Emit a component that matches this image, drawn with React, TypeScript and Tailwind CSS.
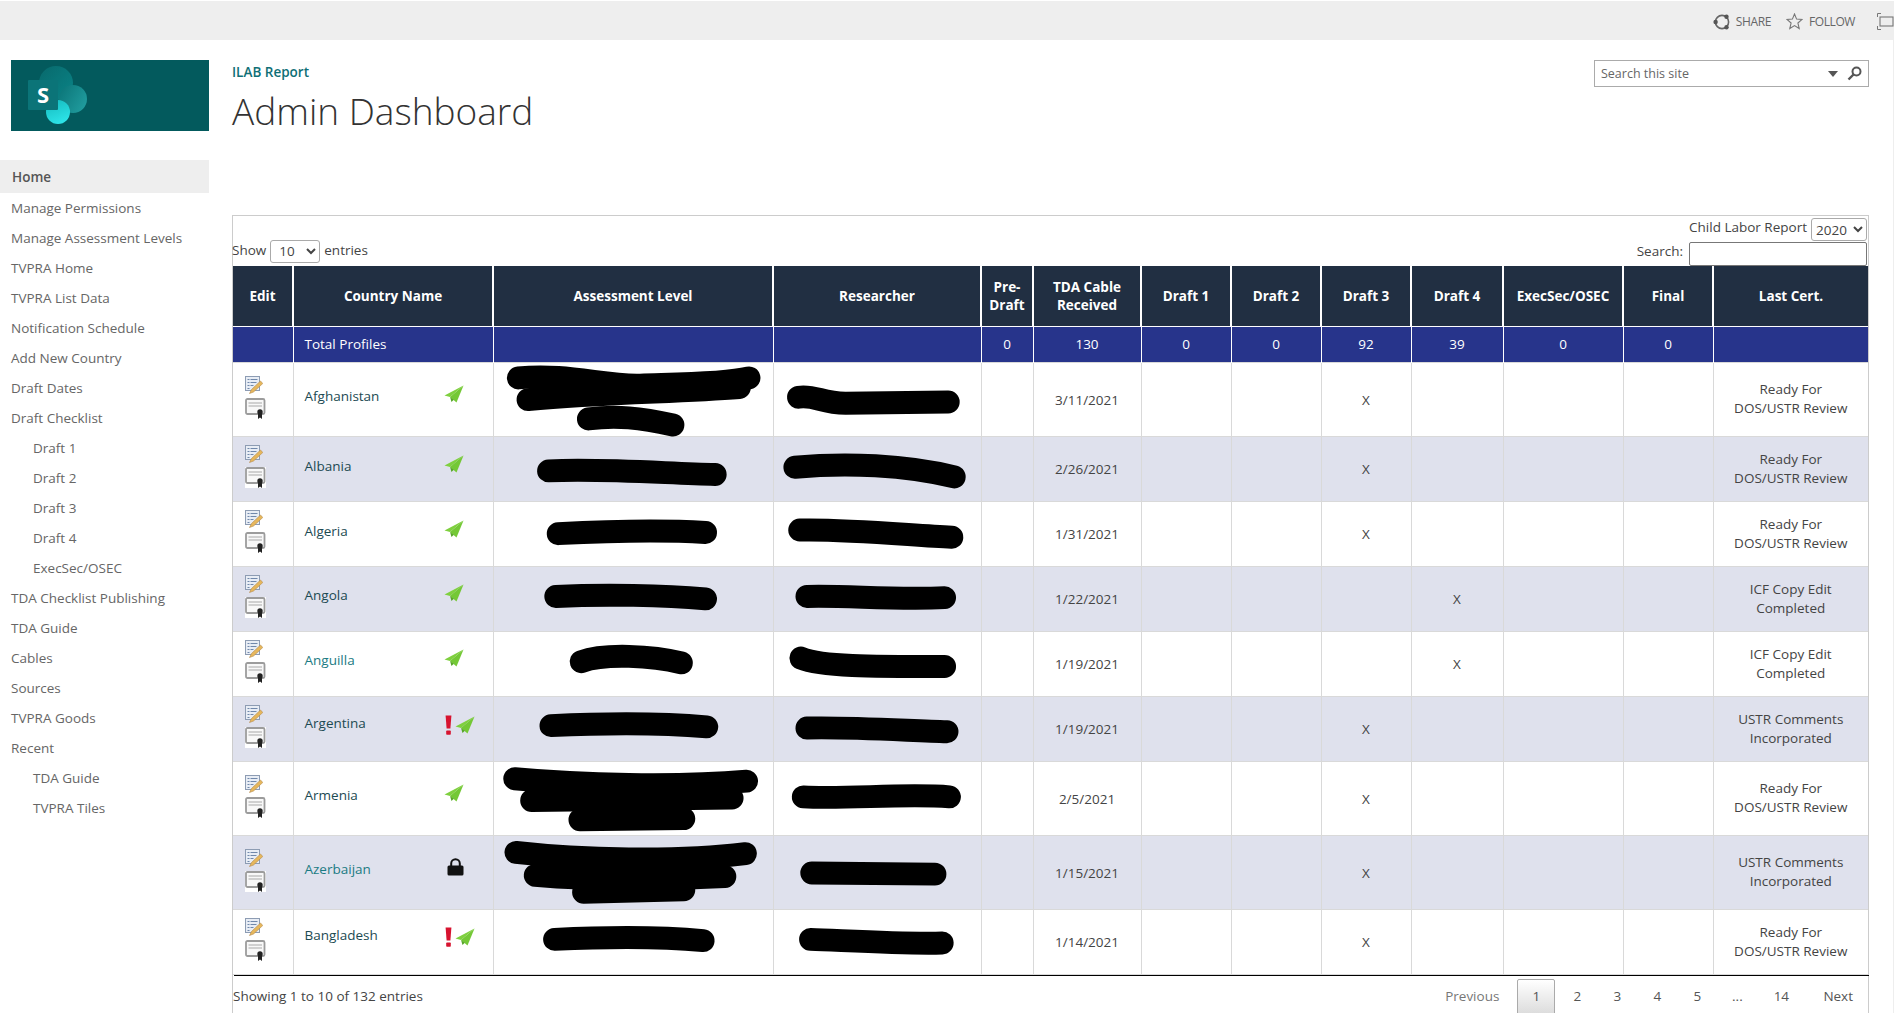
import React from "react";

const navItems: [string, boolean][] = [
  ["Manage Permissions", false], ["Manage Assessment Levels", false], ["TVPRA Home", false], ["TVPRA List Data", false],
  ["Notification Schedule", false], ["Add New Country", false], ["Draft Dates", false], ["Draft Checklist", false],
  ["Draft 1", true], ["Draft 2", true], ["Draft 3", true], ["Draft 4", true], ["ExecSec/OSEC", true],
  ["TDA Checklist Publishing", false], ["TDA Guide", false], ["Cables", false], ["Sources", false], ["TVPRA Goods", false],
  ["Recent", false], ["TDA Guide", true], ["TVPRA Tiles", true],
];

const cols = ["w-[60px]", "w-[200px]", "w-[280px]", "w-[208px]", "w-[52px]", "w-[108px]", "w-[90px]", "w-[90px]", "w-[90px]", "w-[92px]", "w-[120px]", "w-[90px]", "w-[155px]"];
const heads = ["Edit", "Country Name", "Assessment Level", "Researcher", "Pre-Draft", "TDA Cable Received", "Draft 1", "Draft 2", "Draft 3", "Draft 4", "ExecSec/OSEC", "Final", "Last Cert."];
const totals = ["", "Total Profiles", "", "", "0", "130", "0", "0", "92", "39", "0", "0", ""];

type Row = { name: string; link?: boolean; h: string; lift: string; flag?: boolean; lock?: boolean; date: string; d3?: boolean; d4?: boolean; cert: [string, string] };
const ready: [string, string] = ["Ready For", "DOS/USTR Review"];
const icf: [string, string] = ["ICF Copy Edit", "Completed"];
const ustr: [string, string] = ["USTR Comments", "Incorporated"];
const rows: Row[] = [
  { name: "Afghanistan", h: "h-[74px]", lift: "pb-[6px]", date: "3/11/2021", d3: true, cert: ready },
  { name: "Albania", h: "h-[65px]", lift: "pb-[4px]", date: "2/26/2021", d3: true, cert: ready },
  { name: "Algeria", h: "h-[65px]", lift: "pb-[4px]", date: "1/31/2021", d3: true, cert: ready },
  { name: "Angola", h: "h-[65px]", lift: "pb-[6px]", date: "1/22/2021", d4: true, cert: icf },
  { name: "Anguilla", link: true, h: "h-[65px]", lift: "pb-[6px]", date: "1/19/2021", d4: true, cert: icf },
  { name: "Argentina", flag: true, h: "h-[65px]", lift: "pb-[10px]", date: "1/19/2021", d3: true, cert: ustr },
  { name: "Armenia", h: "h-[74px]", lift: "pb-[6px]", date: "2/5/2021", d3: true, cert: ready },
  { name: "Azerbaijan", link: true, lock: true, h: "h-[74px]", lift: "pb-[6px]", date: "1/15/2021", d3: true, cert: ustr },
  { name: "Bangladesh", flag: true, h: "h-[65px]", lift: "pb-[12px]", date: "1/14/2021", d3: true, cert: ready },
];

const strokes = [
  "M429 313 C470 309 500 320 530 319 S600 318 620 313", "M437 331 C500 325 560 325 612 321", "M487 347 C510 344 530 346 557 352",
  "M661 329 C675 327 680 334 700 334 L785 333",
  "M454 390 C500 388 550 392 592 393", "M658 387 C700 383 750 385 790 395",
  "M462 442 C500 440 550 439 584 441", "M662 439 C700 438 750 443 788 445",
  "M460 494 C500 492 550 493 584 496", "M668 494 C700 493 740 497 782 495",
  "M481 548 C500 541 540 543 564 549", "M663 545 C680 552 720 552 782 552",
  "M456 601 C500 599 550 599 585 602", "M668 603 C700 602 750 605 784 606",
  "M426 645 C480 650 560 652 618 647", "M440 663 L606 661", "M480 679 L566 678", "M665 660 C700 662 750 657 786 660",
  "M427 706 C480 712 560 714 617 707", "M443 725 C500 730 560 728 600 726", "M483 739 L566 737", "M672 723 L774 724",
  "M459 778 C500 776 550 776 582 779", "M671 778 C700 779 750 782 780 781",
];

function Plane() {
  return (
    <svg width="20" height="18" viewBox="0 0 20 18" className="shrink-0">
      <path d="M19.5 0.5 L0.5 10.5 L6 12 Z" fill="#7fd03f" />
      <path d="M19.5 0.5 L6 12 L12.5 17.5 Z" fill="#74c836" />
      <path d="M6 12 L7.5 17 L9.8 14.8 Z" fill="#57a52a" />
    </svg>
  );
}

function Bang() {
  return (
    <svg width="7" height="20" viewBox="0 0 7 20" className="shrink-0">
      <path d="M0.6 0.5 H6.4 L5.4 13.5 H1.6 Z" fill="#d7132f" />
      <rect x="1.2" y="15.5" width="4.6" height="4.2" rx="0.8" fill="#d7132f" />
    </svg>
  );
}

function Lock() {
  return (
    <svg width="17" height="18" viewBox="0 0 17 18" className="shrink-0">
      <path d="M4.2 8V5.5a4.3 4.3 0 0 1 8.6 0V8" fill="none" stroke="#111" strokeWidth="2" />
      <rect x="0.5" y="7.5" width="16" height="10" rx="1.5" fill="#111" />
    </svg>
  );
}

function EditIcon() {
  return (
    <svg width="18" height="18" viewBox="0 0 18 18" className="block">
      <rect x="0.5" y="0.5" width="14" height="14" fill="#e8edf5" stroke="#8d9cb3" />
      <path d="M2.5 3.5h2M5.5 3.5h7M2.5 6.5h2M5.5 6.5h6M2.5 9.5h2M5.5 9.5h3M2.5 12.5h2" stroke="#7088ab" strokeWidth="1" />
      <path d="M15.5 5 L6.5 13.5 L4.5 17.5 L8.5 16 L17.8 7.5 Z" fill="#e6b75c" stroke="#b58a4a" strokeWidth="0.6" />
    </svg>
  );
}

function CertIcon({ alt }: { alt: boolean }) {
  return (
    <svg width="21" height="21" viewBox="0 0 21 21" className={alt ? "block bg-white" : "block"}>
      <rect x="1" y="1" width="18.5" height="15" rx="1.5" fill="#f8f8f8" stroke="#9c9c9c" strokeWidth="1.8" />
      <path d="M3.5 5h13.5M3.5 8h13.5" stroke="#a8a8a8" strokeWidth="1.2" />
      <circle cx="15" cy="14" r="2.7" fill="#222" />
      <path d="M13 15 L13 21 L15 19.5 L17 21 L17 15 Z" fill="#222" />
    </svg>
  );
}

function Logo() {
  return (
    <svg width="198" height="71" viewBox="0 0 198 71" className="block">
      <defs>
        <linearGradient id="g1" x1="0" y1="0" x2="1" y2="1">
          <stop offset="0" stopColor="#08696c" />
          <stop offset="1" stopColor="#0a8487" />
        </linearGradient>
        <linearGradient id="g2" x1="0" y1="0" x2="1" y2="0.6">
          <stop offset="0" stopColor="#0a7376" />
          <stop offset="1" stopColor="#1f9a9c" />
        </linearGradient>
        <linearGradient id="g3" x1="0" y1="0" x2="0.4" y2="1">
          <stop offset="0" stopColor="#14b9bd" />
          <stop offset="1" stopColor="#2ce2e6" />
        </linearGradient>
      </defs>
      <rect width="198" height="71" fill="#035a5d" />
      <circle cx="45" cy="23" r="17" fill="url(#g1)" />
      <circle cx="62" cy="39" r="14" fill="url(#g2)" />
      <circle cx="47" cy="52" r="12" fill="url(#g3)" />
      <rect x="17" y="20" width="30" height="30" rx="1" fill="#0b7478" />
      <text x="32" y="43" textAnchor="middle" fill="#fff" fontSize="22" fontWeight="700" fontFamily="'Open Sans', sans-serif">S</text>
    </svg>
  );
}

export default function App() {
  return (
    <div className="relative w-[1894px] h-[1013px] overflow-hidden bg-white font-['Open_Sans',sans-serif] text-[13.5px] text-[#444]">
      <div className="h-10 bg-[#eeeeee] border-t border-white pt-[2px] flex items-center justify-end text-[#666] text-[12px]">
        <svg width="18" height="18" viewBox="0 0 18 18" className="mr-[5px]">
          <circle cx="9" cy="9" r="6.6" fill="none" stroke="#666" strokeWidth="1.6" />
          <circle cx="13.5" cy="3.8" r="2.2" fill="#555" />
          <circle cx="2.6" cy="9" r="2.2" fill="#555" />
          <circle cx="13.5" cy="14.2" r="2.2" fill="#555" />
        </svg>
        <span className="tracking-[-0.4px]">SHARE</span>
        <svg width="17" height="17" viewBox="0 0 17 17" className="ml-[15px] mr-[6px]">
          <path d="M8.5 1 L10.6 6.1 L16 6.5 L11.9 10 L13.2 15.5 L8.5 12.6 L3.8 15.5 L5.1 10 L1 6.5 L6.4 6.1 Z" fill="none" stroke="#777" strokeWidth="1.1" />
        </svg>
        <span className="tracking-[-0.4px]">FOLLOW</span>
        <svg width="17" height="17" viewBox="0 0 17 17" className="ml-[22px]">
          <rect x="3" y="4" width="13" height="9" fill="none" stroke="#777" strokeWidth="1.1" />
          <path d="M0.5 4V0.5H4M0.5 13V16.5H4" fill="none" stroke="#777" strokeWidth="1" />
        </svg>
      </div>

      <div className="flex h-[973px] border-r border-[#eeeeee]">
        <aside className="w-[209px] shrink-0">
          <div className="ml-[11px] mt-5">
            <Logo />
          </div>
          <nav className="mt-[29px] text-[#666]">
            <div className="h-[33px] bg-[#eeeeee] pl-3 pt-px flex items-center font-semibold text-[#555]">Home</div>
            {navItems.map(([t, sub], i) => (
              <div key={i} className={sub ? "h-[30px] pl-[33px] flex items-center" : "h-[30px] pl-[11px] flex items-center"}>{t}</div>
            ))}
          </nav>
        </aside>

        <main className="ml-[23px] w-[1637px] shrink-0">
          <div className="h-[175px] flex justify-between items-start">
            <div className="pt-[22px]">
              <div className="text-[#0f6f76] font-semibold text-[13.5px] leading-5">ILAB Report</div>
              <h1 className="text-[37px] leading-[48px] font-light text-[#333] mt-[5px]">Admin Dashboard</h1>
            </div>
            <div className="mt-5 w-[275px] h-[27px] border border-[#ababab] flex items-center pl-[6px] pr-[6px] text-[12.5px] text-[#666]">
              <span className="flex-1 pt-px">Search this site</span>
              <svg width="10" height="6" viewBox="0 0 10 6" className="mr-[9px]"><path d="M0 0H10L5 6Z" fill="#555" /></svg>
              <svg width="15" height="15" viewBox="0 0 15 15">
                <circle cx="9.5" cy="5.5" r="4" fill="none" stroke="#555" strokeWidth="2" />
                <path d="M6.5 8.5 L1.5 13.5" stroke="#555" strokeWidth="2.4" />
              </svg>
            </div>
          </div>

          <section className="h-[798px] border-t border-l border-r border-[#cccccc]">
            <div className="h-[50px] flex justify-between items-end">
              <div className="flex items-center gap-[4px] pb-[3px] -ml-px">
                <span className="pb-[3px]">Show</span>
                <select defaultValue="10" className="w-[50px] h-[23px] border border-[#aaa] rounded-[3px] bg-white pl-[4px] text-[13.5px]">
                  <option value="10">10</option>
                </select>
                <span className="pb-[3px]">entries</span>
              </div>
              <div className="flex flex-col items-end pr-px">
                <div className="flex items-center gap-[4px] h-[23px]">
                  <span className="pb-[5px]">Child Labor Report</span>
                  <select defaultValue="2020" className="w-[56px] h-[23px] border border-[#aaa] rounded-[3px] bg-white text-[13.5px]">
                    <option value="2020">2020</option>
                  </select>
                </div>
                <div className="flex items-center gap-[6px] h-[25px]">
                  <span className="pb-[5px]">Search:</span>
                  <input aria-label="Search" className="w-[178px] h-[24px] border border-[#777] rounded-[2px] bg-white" />
                </div>
              </div>
            </div>

            <table className="table-fixed border-collapse w-[1635px] text-center">
              <colgroup>
                {cols.map((c, i) => <col key={i} className={c} />)}
              </colgroup>
              <thead>
                <tr className="h-[60px] bg-[#212f42] text-white">
                  {heads.map((h) => (
                    <th key={h} className="border-x-2 border-b border-white px-1 pt-px text-[13.5px] leading-[18px] font-bold first:border-l-0 last:border-r-0">{h}</th>
                  ))}
                </tr>
                <tr className="h-[36px] bg-[#27348b] text-white">
                  {totals.map((t, i) => (
                    <td key={i} className={i === 1 ? "border-x border-white text-left pl-[11px] first:border-l-0 last:border-r-0" : "border-x border-white first:border-l-0 last:border-r-0"}>{t}</td>
                  ))}
                </tr>
              </thead>
              <tbody>
                {rows.map((r, i) => {
                  const alt = i % 2 === 1;
                  const cell = "border border-[#d9d9d9] first:border-l-0 last:border-r-0";
                  const low = `${cell} pt-[2px]`;
                  return (
                    <tr key={r.name} className={alt ? `${r.h} bg-[#dfe1ed]` : `${r.h} bg-white`}>
                      <td className={cell}>
                        <div className="flex flex-col items-start gap-[4px] pl-[12px] pb-[4px]">
                          <EditIcon />
                          <CertIcon alt={alt} />
                        </div>
                      </td>
                      <td className={cell}>
                        <div className={`flex items-center justify-between pl-[11px] ${r.flag ? "pr-[18px]" : "pr-[29px]"} ${r.lift}`}>
                          <span className={r.link ? "text-[#1b7b83]" : "text-[#1c4a52]"}>{r.name}</span>
                          <span className={r.flag ? "flex items-center gap-[3px] mt-[3px]" : "flex items-center mb-[5px]"}>
                            {r.flag && <Bang />}
                            {r.lock ? <Lock /> : <Plane />}
                          </span>
                        </div>
                      </td>
                      <td className={cell}></td>
                      <td className={cell}></td>
                      <td className={cell}></td>
                      <td className={low}>{r.date}</td>
                      <td className={cell}></td>
                      <td className={cell}></td>
                      <td className={low}>{r.d3 ? "X" : ""}</td>
                      <td className={low}>{r.d4 ? "X" : ""}</td>
                      <td className={cell}></td>
                      <td className={cell}></td>
                      <td className={`${cell} leading-[19px]`}>
                        <div>{r.cert[0]}</div>
                        <div>{r.cert[1]}</div>
                      </td>
                    </tr>
                  );
                })}
              </tbody>
            </table>

            <div className="border-t border-black ml-px w-[1635px] flex justify-between items-start">
              <div className="pt-[10px] -ml-px">Showing 1 to 10 of 132 entries</div>
              <div className="flex items-center pt-[3px] pr-[16px] text-[#555]">
                <span className="mr-[18px] text-[#777]">Previous</span>
                <span className="w-[38px] h-[36px] mr-[2px] border border-[#aaa] rounded-t-[2px] bg-gradient-to-b from-white to-[#dcdcdc] flex items-center justify-center">1</span>
                <span className="w-[40px] text-center">2</span>
                <span className="w-[40px] text-center">3</span>
                <span className="w-[40px] text-center">4</span>
                <span className="w-[40px] text-center">5</span>
                <span className="w-[40px] text-center">...</span>
                <span className="w-[48px] text-center">14</span>
                <span className="ml-[18px]">Next</span>
              </div>
            </div>
          </section>
        </main>
      </div>

      <svg viewBox="0 0 1568 839" className="absolute left-0 top-0 w-[1894px] h-[1013px] pointer-events-none">
        {strokes.map((d, i) => (
          <path key={i} d={d} fill="none" stroke="#000" strokeWidth="19" strokeLinecap="round" strokeLinejoin="round" />
        ))}
      </svg>
    </div>
  );
}
